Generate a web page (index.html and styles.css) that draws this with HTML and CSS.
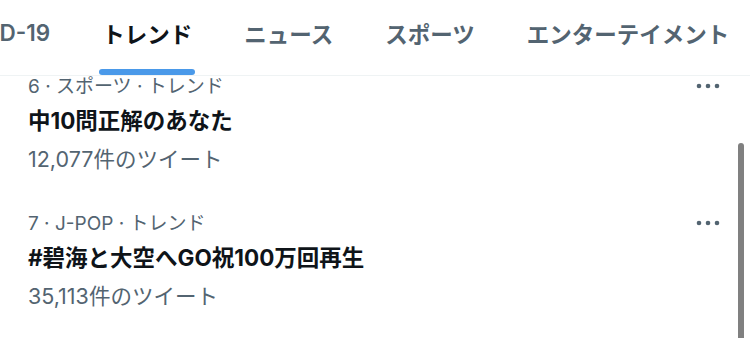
FILE: index.html
```html
<!DOCTYPE html>
<html lang="ja">
<head>
<meta charset="utf-8">
<link rel="stylesheet" href="styles.css">
</head>
<body>
<div class="screen">
  <nav class="tabs">
    <div class="tab-strip">
      <span class="tab">COVID-19</span>
      <span class="tab active">トレンド</span>
      <span class="tab">ニュース</span>
      <span class="tab">スポーツ</span>
      <span class="tab">エンターテイメント</span>
    </div>
  </nav>
  <main class="list">
    <article class="trend">
      <div class="meta-row">
        <span class="meta">6 · スポーツ · トレンド</span>
        <svg class="more" width="24" height="6" viewBox="0 0 24 6"><circle cx="3" cy="3" r="2.3"/><circle cx="12" cy="3" r="2.3"/><circle cx="21" cy="3" r="2.3"/></svg>
      </div>
      <div class="title">中10問正解のあなた</div>
      <div class="count">12,077件のツイート</div>
    </article>
    <article class="trend">
      <div class="meta-row">
        <span class="meta">7 · J-POP · トレンド</span>
        <svg class="more" width="24" height="6" viewBox="0 0 24 6"><circle cx="3" cy="3" r="2.3"/><circle cx="12" cy="3" r="2.3"/><circle cx="21" cy="3" r="2.3"/></svg>
      </div>
      <div class="title">#碧海と大空へGO祝100万回再生</div>
      <div class="count">35,113件のツイート</div>
    </article>
  </main>
  <div class="scrollbar"></div>
</div>
</body>
</html>
```
FILE: styles.css
```css
html, body {
  margin: 0;
  padding: 0;
  background: #ffffff;
}
body {
  font-family: Inter, "Noto Sans CJK JP", sans-serif;
  color: #0f1419;
}
.screen {
  position: relative;
  width: 750px;
  height: 338px;
  overflow: hidden;
}
.tabs {
  position: relative;
  z-index: 2;
  height: 75px;
  background: #ffffff;
  border-bottom: 1px solid #eff3f4;
  overflow: hidden;
}
.tab-strip {
  display: flex;
  height: 100%;
  margin-left: -82px;
  white-space: nowrap;
}
.tab {
  position: relative;
  display: flex;
  align-items: center;
  padding: 0 26px 10px;
  font-size: 22.5px;
  font-weight: 600;
  color: #536471;
}
.tab.active {
  color: #0f1419;
  font-weight: 700;
}
.tab.active::after {
  content: "";
  position: absolute;
  left: 23px;
  right: 23px;
  bottom: 0;
  height: 6px;
  border-radius: 3px;
  background: #4a99e9;
}
.list {
  margin-top: -20px;
}
.trend {
  display: flex;
  flex-direction: column;
  padding: 18px 30px 21px 28px;
}
.meta-row {
  display: flex;
  align-items: center;
  justify-content: space-between;
  height: 26px;
}
.meta {
  font-size: 19px;
  line-height: 26px;
  color: #536471;
}
.more {
  fill: #536471;
  margin-top: -2px;
}
.title {
  margin-top: 3px;
  font-size: 22.5px;
  line-height: 35px;
  font-weight: 700;
  color: #0f1419;
}
.count {
  margin-top: 8px;
  font-size: 21.5px;
  line-height: 26px;
  color: #536471;
}
.scrollbar {
  position: absolute;
  left: 738px;
  top: 143px;
  width: 6px;
  height: 200px;
  border-radius: 3px;
  background: #808080;
}
```
